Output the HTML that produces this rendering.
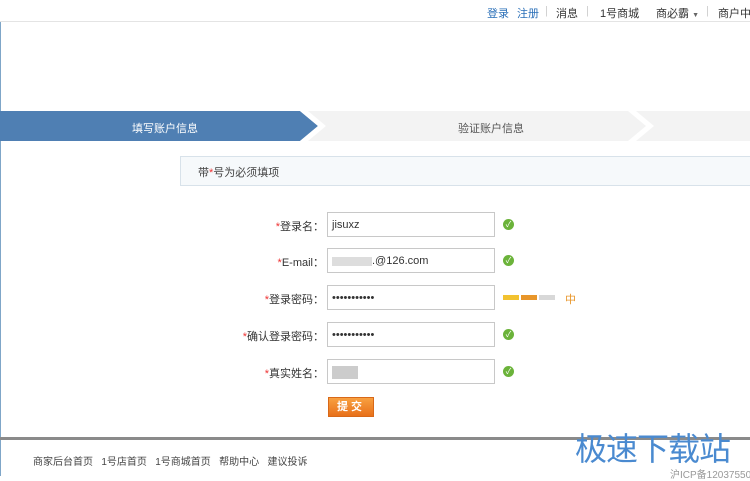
<!DOCTYPE html><html><head><meta charset="utf-8"><style>
body{margin:0;width:750px;height:476px;overflow:hidden;background:#fff;font-family:"Liberation Sans","Noto Sans CJK SC",sans-serif;font-size:11px;color:#333;position:relative}
.a{position:absolute;white-space:nowrap}
.top{left:0;top:0;width:750px;height:21px;border-bottom:1px solid #e4e4e4;background:#fff}
.top span{position:absolute;top:5px;font-size:11px;color:#333;white-space:nowrap}
.sep{color:#ccc!important}
.lab{position:absolute;right:426px;text-align:right;font-size:11px;color:#333;white-space:nowrap}
.lab b{color:#e33;font-weight:normal}
.inp{position:absolute;left:327px;height:25px;border:1px solid #c8c8c8;background:#fff;font-size:11px;line-height:24px;padding-left:4px;box-sizing:border-box;width:168px;white-space:nowrap}
.ok{position:absolute;left:503px;width:11px;height:11px;border-radius:50%;background:#6bb33a;color:#fff;font-size:8px;line-height:11px;text-align:center}
</style></head><body>
<div class="a" style="left:0;top:0;width:1px;height:476px;background:#7fa6c8"></div>
<div class="a top">
<span style="left:487px;color:#2a6fb8">登录</span><span style="left:517px;color:#2a6fb8">注册</span>
<span class="sep" style="left:545px">|</span><span style="left:556px">消息</span>
<span class="sep" style="left:586px">|</span><span style="left:600px">1号商城</span>
<span style="left:656px">商必霸 <small style="font-size:7px;color:#666">▼</small></span>
<span class="sep" style="left:706px">|</span><span style="left:718px">商户中心</span>
</div>
<svg class="a" style="left:0;top:111px" width="750" height="30">
<rect x="0" y="0" width="750" height="30" fill="#f3f3f3"/>
<polygon points="0,0 300,0 318,15 300,30 0,30" fill="#4f7fb3"/>
<polygon points="300,0 308,0 326,15 308,30 300,30 318,15" fill="#fff"/>
<polygon points="628,0 636,0 654,15 636,30 628,30 646,15" fill="#fff"/>
</svg>
<div class="a" style="left:132px;top:120px;color:#fff;font-size:11px">填写账户信息</div>
<div class="a" style="left:458px;top:120px;color:#555;font-size:11px">验证账户信息</div>
<div class="a" style="left:180px;top:156px;width:580px;height:28px;border:1px solid #d8e2ea;background:#f6f9fb"></div>
<div class="a" style="left:198px;top:164px;color:#444">带<b style="color:#e33;font-weight:normal">*</b>号为必须填项</div>

<div class="lab" style="top:218px"><b>*</b>登录名：</div>
<div class="inp" style="top:212px">jisuxz</div><div class="ok" style="top:219px">✓</div>
<div class="lab" style="top:254px"><b>*</b>E-mail：</div>
<div class="inp" style="top:248px"><span style="display:inline-block;width:40px;height:9px;background:#ddd;vertical-align:middle"></span>.@126.com</div><div class="ok" style="top:255px">✓</div>
<div class="lab" style="top:291px"><b>*</b>登录密码：</div>
<div class="inp" style="top:285px">•••••••••••</div>
<div class="a" style="left:503px;top:295px;width:16px;height:5px;background:#f2c230"></div>
<div class="a" style="left:521px;top:295px;width:16px;height:5px;background:#e8962a"></div>
<div class="a" style="left:539px;top:295px;width:16px;height:5px;background:#d8d8d8"></div>
<div class="a" style="left:565px;top:291px;color:#e8962a">中</div>
<div class="lab" style="top:328px"><b>*</b>确认登录密码：</div>
<div class="inp" style="top:322px">•••••••••••</div><div class="ok" style="top:329px">✓</div>
<div class="lab" style="top:365px"><b>*</b>真实姓名：</div>
<div class="inp" style="top:359px"><span style="display:inline-block;width:26px;height:13px;background:#ccc;vertical-align:middle"></span></div><div class="ok" style="top:366px">✓</div>
<div class="a" style="left:328px;top:397px;width:46px;height:20px;background:linear-gradient(#f8a040,#e8701a);border:1px solid #d86818;box-sizing:border-box;color:#fff;text-align:center;line-height:18px;font-weight:bold;letter-spacing:3px">提交</div>

<div class="a" style="left:0;top:437px;width:750px;height:3px;background:#8a8a8a"></div>
<div class="a" style="left:33px;top:453px;color:#444;font-size:10px">商家后台首页&nbsp;&nbsp; 1号店首页&nbsp;&nbsp; 1号商城首页&nbsp;&nbsp; 帮助中心&nbsp;&nbsp; 建议投诉</div>
<div class="a" style="left:575px;top:424px;font-size:32px;color:#4a8ad0;letter-spacing:-1px">极速下载站</div>
<div class="a" style="left:670px;top:466px;color:#999;font-size:10px">沪ICP备12037550号 ©</div>
</body></html>
